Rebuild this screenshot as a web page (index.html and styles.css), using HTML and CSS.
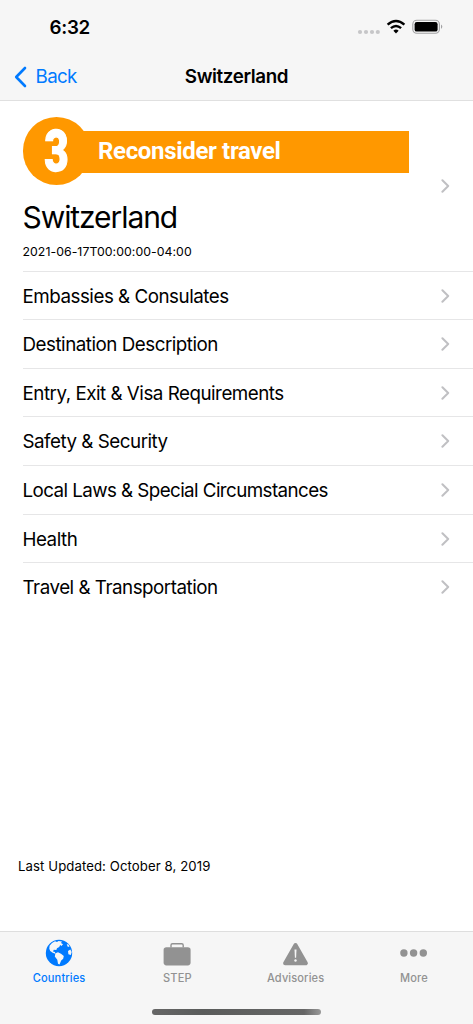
FILE: index.html
```html
<!DOCTYPE html>
<html lang="en">
<head>
<meta charset="utf-8">
<title>Switzerland</title>
<link rel="stylesheet" href="styles.css">
</head>
<body>
<div class="screen">
  <header class="top">
    <div class="status">
      <span class="time">6:32</span>
      <svg class="status-icons" width="86" height="18" viewBox="0 0 86 18">
        <g fill="#c6c6c8"><circle cx="3" cy="13" r="2.1"/><circle cx="9" cy="13" r="2.1"/><circle cx="15" cy="13" r="2.1"/><circle cx="20.8" cy="13" r="2.1"/></g>
        <g fill="none" stroke="#000" stroke-width="2.4">
          <path d="M30.6 5.7Q39 -1.7 47.4 5.7"/>
          <path d="M33.9 9.2Q39 4.8 44.1 9.2"/>
        </g>
        <path d="M36.4 11.7Q39 9.5 41.6 11.7L39 14.6Z"/>
        <rect x="55.8" y="1.3" width="26.6" height="13" rx="4" fill="none" stroke="#a2a2a4" stroke-width="1.1"/>
        <rect x="57.6" y="3" width="23" height="9.6" rx="2.2"/>
        <path d="M84 5.6Q86.6 7.8 84 10Z" fill="#a2a2a4"/>
      </svg>
    </div>
    <nav class="navbar">
      <a class="back"><svg width="13" height="22" viewBox="0 0 13 22"><path d="M11 2L2.2 11L11 20" fill="none" stroke="#007aff" stroke-width="2.6" stroke-linecap="round" stroke-linejoin="round"/></svg><span>Back</span></a>
      <h1 class="title">Switzerland</h1>
    </nav>
  </header>
  <main class="content">
    <section class="summary">
      <div class="summary-text">
        <div class="advisory"><span class="level"><b>3</b></span><span class="banner">Reconsider travel</span></div>
        <h2 class="country">Switzerland</h2>
        <p class="date">2021-06-17T00:00:00-04:00</p>
      </div>
      <svg class="chevron" viewBox="0 0 9 14"><path d="M1.4 1.2L7.2 7L1.4 12.8"/></svg>
    </section>
    <ul class="list">
      <li><span>Embassies &amp; Consulates</span><svg class="chevron" viewBox="0 0 9 14"><path d="M1.4 1.2L7.2 7L1.4 12.8"/></svg></li>
      <li><span>Destination Description</span><svg class="chevron" viewBox="0 0 9 14"><path d="M1.4 1.2L7.2 7L1.4 12.8"/></svg></li>
      <li><span>Entry, Exit &amp; Visa Requirements</span><svg class="chevron" viewBox="0 0 9 14"><path d="M1.4 1.2L7.2 7L1.4 12.8"/></svg></li>
      <li><span>Safety &amp; Security</span><svg class="chevron" viewBox="0 0 9 14"><path d="M1.4 1.2L7.2 7L1.4 12.8"/></svg></li>
      <li><span class="tight">Local Laws &amp; Special Circumstances</span><svg class="chevron" viewBox="0 0 9 14"><path d="M1.4 1.2L7.2 7L1.4 12.8"/></svg></li>
      <li><span>Health</span><svg class="chevron" viewBox="0 0 9 14"><path d="M1.4 1.2L7.2 7L1.4 12.8"/></svg></li>
      <li><span>Travel &amp; Transportation</span><svg class="chevron" viewBox="0 0 9 14"><path d="M1.4 1.2L7.2 7L1.4 12.8"/></svg></li>
    </ul>
    <p class="updated">Last Updated: October 8, 2019</p>
  </main>
  <footer class="bottom">
    <div class="tabs">
      <a class="tab active"><svg width="28" height="28" viewBox="0 0 28 28"><circle cx="14" cy="14" r="13.2" fill="#007aff"/><path fill="#f6f6f6" d="M4.6 6.8L7 4L10 2.3L12 3L13.5 2L17 2.4L16 4L18 5.2L16.5 7L15.2 6L14.2 8L12 9.3L11.3 11L8.8 10.8L8 12.4L10 13L10.3 14.8L7.7 13.7L5.2 12L4.3 9.8Z"/><path fill="#f6f6f6" d="M10.4 14.3L13 13.3L16 14.7L18.8 17L18.2 19.8L16.2 21.4L14.5 25.6L13 24.8L12.3 20.7L9.8 17.4Z"/><path fill="#f6f6f6" d="M21.8 5L23.7 5.8L24.4 8L22.5 7.5ZM23 12L25.3 10.4L26.7 13L25.8 16L23.4 15.2Z"/></svg><span>Countries</span></a>
      <a class="tab"><svg width="28" height="28" viewBox="0 0 28 28"><path d="M8 8.5V6.2Q8 4.8 9.4 4.8H18.8Q20.2 4.8 20.2 6.2V8.5" fill="none" stroke="#929292" stroke-width="1.4"/><rect x=".6" y="8.2" width="27" height="18.2" rx="2.8" fill="#929292"/></svg><span>STEP</span></a>
      <a class="tab"><svg width="28" height="28" viewBox="0 0 28 28"><path d="M13.5 6L23.9 24.2H3.1Z" fill="#929292" stroke="#929292" stroke-width="4" stroke-linejoin="round"/><path d="M12.5 10.5H14.5L14.1 18.8H12.9Z" fill="#f6f6f6"/><circle cx="13.5" cy="21.5" r="1.2" fill="#f6f6f6"/></svg><span>Advisories</span></a>
      <a class="tab"><svg width="28" height="28" viewBox="0 0 28 28" fill="#929292"><circle cx="3.9" cy="14" r="3.7"/><circle cx="13.6" cy="14" r="3.7"/><circle cx="23.3" cy="14" r="3.7"/></svg><span>More</span></a>
    </div>
    <div class="home"></div>
  </footer>
</div>
</body>
</html>
```
FILE: styles.css
```css
* { box-sizing: border-box; }
body, h1, h2, p, ul { margin: 0; padding: 0; }
body { background: #fff; color: #000; font-family: Inter, "Liberation Sans", sans-serif; }
svg { display: block; flex: none; }
.screen { width: 473px; height: 1024px; display: flex; flex-direction: column; overflow: hidden; }
.top { height: 101px; background: #f6f6f6; border-bottom: 1px solid #e0e0e0; flex: none; }
.status { height: 55px; padding: 0 30px 0 49.5px; display: flex; align-items: center; justify-content: space-between; }
.time { font-size: 18.8px; font-weight: 600; letter-spacing: -.3px; }
.navbar { height: 43px; display: grid; grid-template-columns: 1fr auto 1fr; align-items: center; }
.back { display: flex; align-items: center; gap: 8.5px; padding-left: 14px; color: #007aff; font-size: 18.8px; letter-spacing: -.65px; }
.title { font-size: 18.8px; font-weight: 600; letter-spacing: -.38px; }
.content { flex: 1; padding-left: 22.5px; display: flex; flex-direction: column; }
.summary { height: 169.5px; padding: 16px 23px 0 0; display: flex; align-items: center; justify-content: space-between; }
.summary .chevron { margin-bottom: 16px; }
.summary-text { height: 153.5px; }
.advisory { display: flex; align-items: center; height: 68px; }
.level { width: 67.5px; height: 67.5px; border-radius: 50%; background: #ff9800; color: #fff; display: grid; place-items: center; font-family: Roboto, sans-serif; font-size: 57px; line-height: 67px; flex: none; }
.level b { font-weight: 900; transform: scaleX(.74); -webkit-text-stroke: 1.3px #fff; }
.banner { width: 330.5px; height: 42px; margin: 2px 0 0 -12px; padding-left: 20px; background: #ff9800; color: #fff; font: bold 24px/41px Roboto, sans-serif; letter-spacing: -.33px; white-space: nowrap; }
.country { margin-top: 11.5px; font-size: 30px; line-height: 40px; font-weight: 400; letter-spacing: -1.08px; }
.date { margin-top: 6.5px; font-size: 12.3px; line-height: 18px; letter-spacing: .05px; }
.chevron { width: 9px; height: 14px; fill: none; stroke: #c0c0c3; stroke-width: 2; stroke-linecap: round; stroke-linejoin: round; }
.list { list-style: none; }
.list li { height: 48.65px; border-top: 1px solid #e6e6e7; padding: 1.5px 23px 0 0; display: flex; align-items: center; justify-content: space-between; font-size: 18.8px; letter-spacing: -.49px; white-space: nowrap; }
.list .chevron { margin-bottom: 1px; }
.tight { letter-spacing: -.58px; }
.updated { margin: auto 0 56px -4.5px; font-size: 13.2px; line-height: 18px; letter-spacing: .08px; }
.bottom { height: 93px; flex: none; background: #f6f6f6; border-top: 1px solid #dedede; display: flex; flex-direction: column; align-items: center; }
.tabs { width: 100%; display: grid; grid-template-columns: repeat(4, 1fr); padding-top: 7px; height: 76px; }
.tab { display: flex; flex-direction: column; align-items: center; gap: 4px; color: #929292; font-size: 11.05px; line-height: 15px; font-weight: 500; letter-spacing: .12px; }
.active { color: #007aff; }
.home { width: 169px; height: 6px; border-radius: 3px; margin-top: 1px; background: linear-gradient(90deg, #666 0%, #5a5c5b 30%, #666 90%, #999 100%); }
```
